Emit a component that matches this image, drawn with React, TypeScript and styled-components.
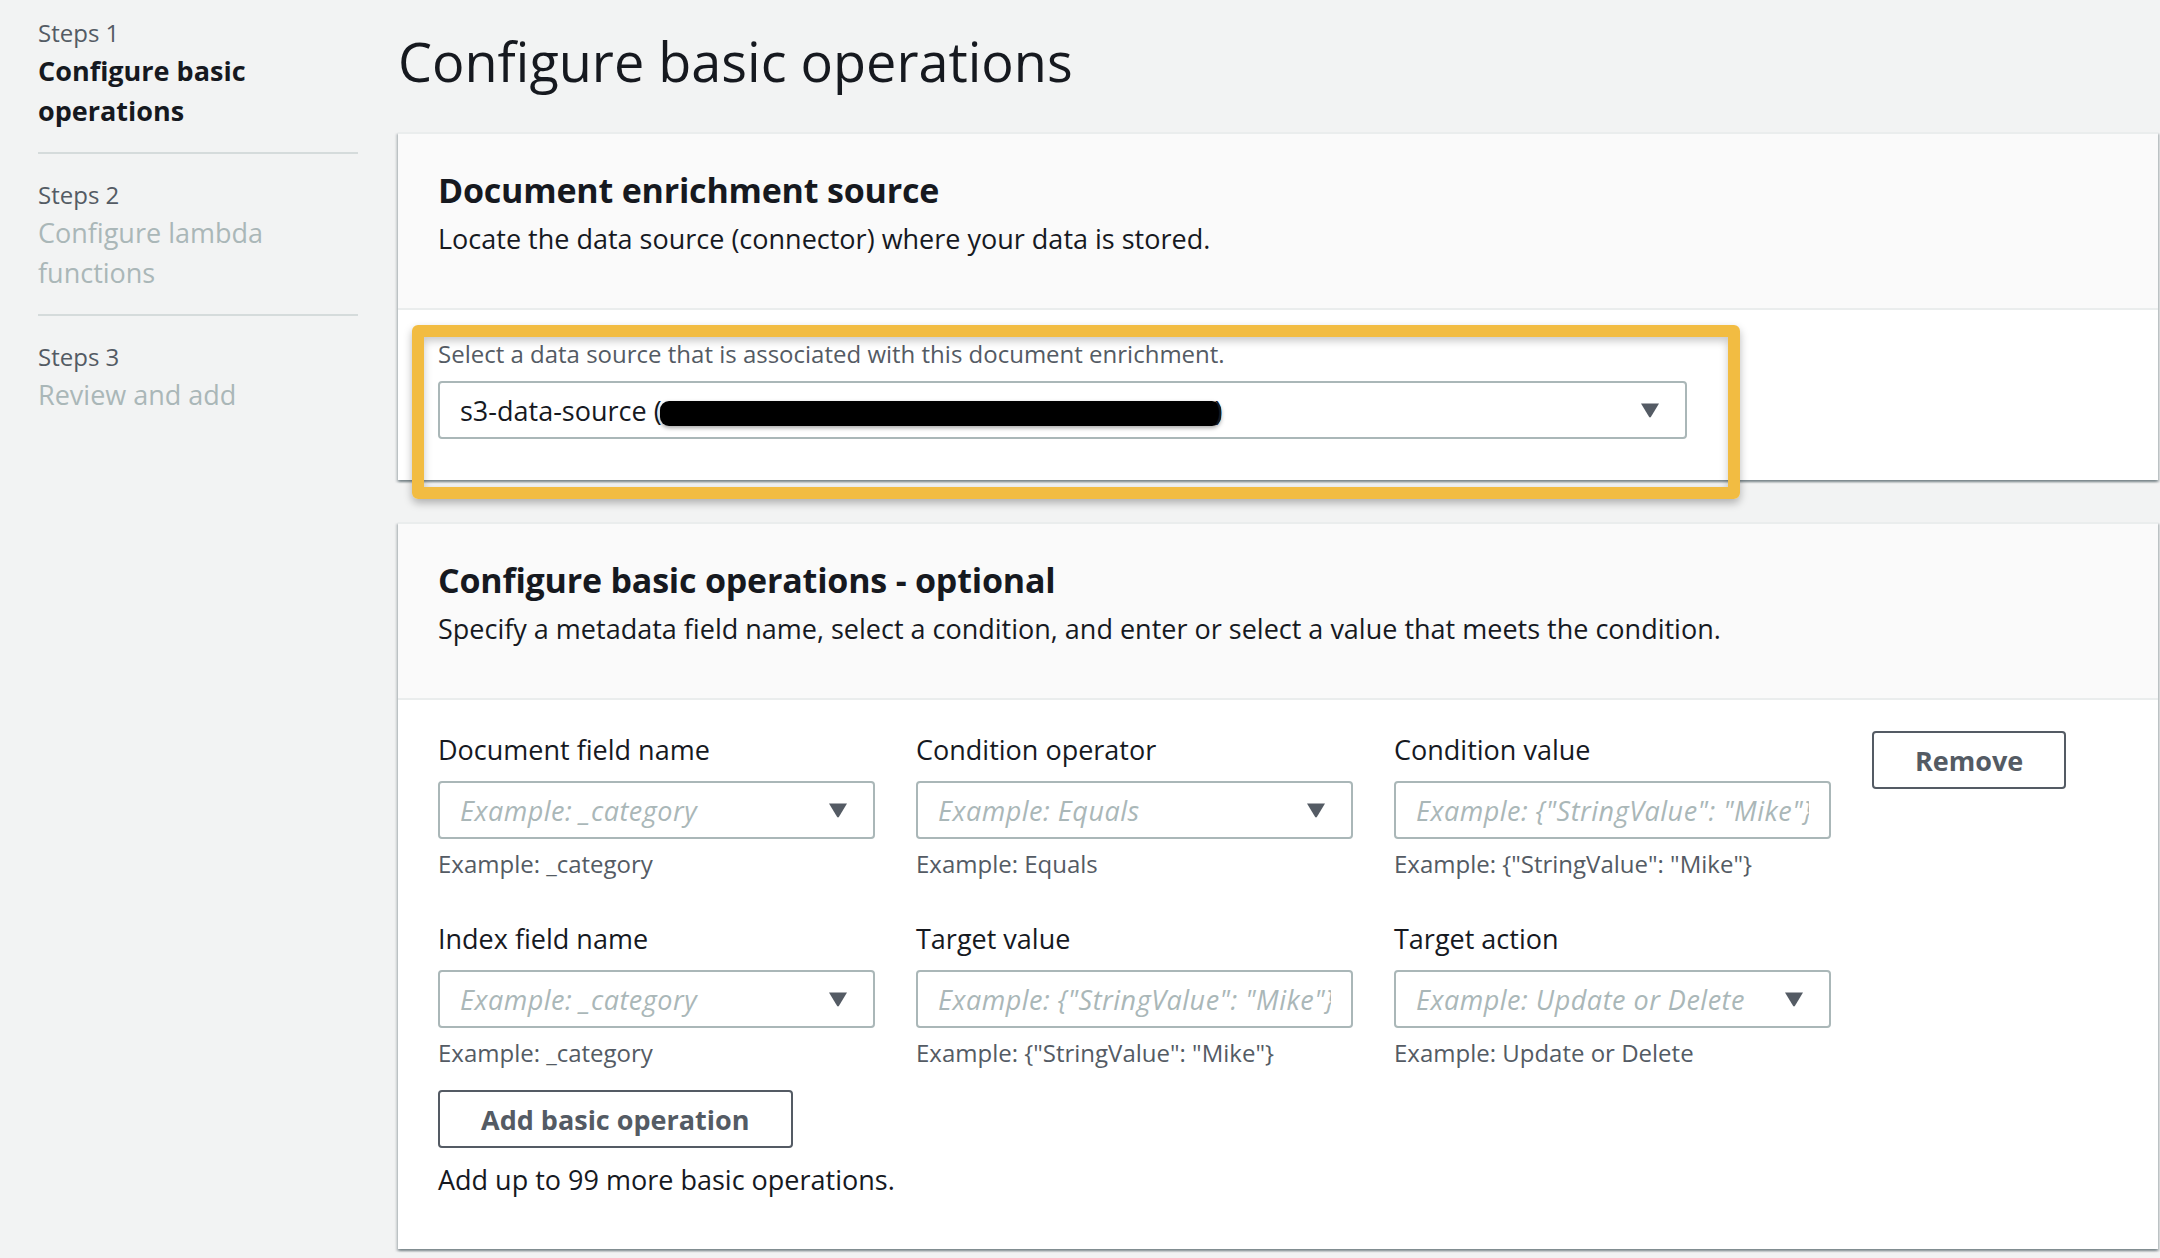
import React from 'react';
import styled, { createGlobalStyle } from 'styled-components';

const GlobalStyle = createGlobalStyle`
  html, body {
    margin: 0;
    padding: 0;
    background: #f2f3f3;
  }
  body {
    font-family: "Open Sans", "Noto Sans", Arial, sans-serif;
    color: #16191f;
  }
  * {
    box-sizing: border-box;
  }
`;

type FieldDef = {
    label: string;
    placeholder: string;
    helper: string;
    kind: 'select' | 'input';
};

const rows: FieldDef[][] = [
    [
        { label: 'Document field name', placeholder: 'Example: _category', helper: 'Example: _category', kind: 'select' },
        { label: 'Condition operator', placeholder: 'Example: Equals', helper: 'Example: Equals', kind: 'select' },
        { label: 'Condition value', placeholder: 'Example: {"StringValue": "Mike"}', helper: 'Example: {"StringValue": "Mike"}', kind: 'input' },
    ],
    [
        { label: 'Index field name', placeholder: 'Example: _category', helper: 'Example: _category', kind: 'select' },
        { label: 'Target value', placeholder: 'Example: {"StringValue": "Mike"}', helper: 'Example: {"StringValue": "Mike"}', kind: 'input' },
        { label: 'Target action', placeholder: 'Example: Update or Delete', helper: 'Example: Update or Delete', kind: 'select' },
    ],
];

const steps = [
    { label: 'Steps 1', title: 'Configure basic operations', active: true },
    { label: 'Steps 2', title: 'Configure lambda functions', active: false },
    { label: 'Steps 3', title: 'Review and add', active: false },
];

const Caret = () => (
    <svg width="20" height="16" viewBox="0 0 20 16">
        <path d="M1 1.5h18l-8 13.2a1.2 1.2 0 0 1-2 0z" fill="#545b64" />
    </svg>
);

const Field = ({ field }: { field: FieldDef }) => (
    <FieldBox>
        <FieldLabel>{field.label}</FieldLabel>
        {field.kind === 'select' ? (
            <SelectBox>
                <Placeholder>{field.placeholder}</Placeholder>
                <Caret />
            </SelectBox>
        ) : (
            <TextInput type="text" placeholder={field.placeholder} />
        )}
        <Helper>{field.helper}</Helper>
    </FieldBox>
);

const App = () => {
    return (
        <Page>
            <GlobalStyle />
            <Sidebar>
                {steps.map((s, i) => (
                    <Step key={s.label} $first={i === 0} $last={i === steps.length - 1}>
                        <StepLabel>{s.label}</StepLabel>
                        <StepTitle $active={s.active}>{s.title}</StepTitle>
                    </Step>
                ))}
            </Sidebar>
            <Main>
                <PageTitle>Configure basic operations</PageTitle>

                <Card>
                    <CardHeader>
                        <CardTitle>Document enrichment source</CardTitle>
                        <CardDesc>Locate the data source (connector) where your data is stored.</CardDesc>
                    </CardHeader>
                    <SourceBody>
                        <SourceField>
                            <SourceHint>Select a data source that is associated with this document enrichment.</SourceHint>
                            <SelectBox>
                                <SelectValue>
                                    s3-data-source (<Redacted />)
                                </SelectValue>
                                <Caret />
                            </SelectBox>
                            <Highlight />
                        </SourceField>
                    </SourceBody>
                </Card>

                <Card>
                    <CardHeader>
                        <CardTitle>Configure basic operations - optional</CardTitle>
                        <CardDesc>
                            Specify a metadata field name, select a condition, and enter or select a value that meets the condition.
                        </CardDesc>
                    </CardHeader>
                    <OpsBody>
                        <OpsGrid>
                            {rows[0].map(f => <Field key={f.label} field={f} />)}
                            <Button $top>Remove</Button>
                            {rows[1].map(f => <Field key={f.label} field={f} />)}
                        </OpsGrid>
                        <Button>Add basic operation</Button>
                        <OpsNote>Add up to 99 more basic operations.</OpsNote>
                    </OpsBody>
                </Card>
            </Main>
        </Page>
    );
};

const Page = styled.div`
  display: flex;
  min-height: 1258px;
`;

const Sidebar = styled.nav`
  width: 320px;
  margin-left: 38px;
  flex-shrink: 0;
`;

const Step = styled.div<{ $first?: boolean; $last?: boolean }>`
  padding: ${p => (p.$first ? '17px' : '25px')} 0 21px;
  border-bottom: ${p => (p.$last ? 'none' : '2px solid #d5dbdb')};
`;

const StepLabel = styled.div`
  font-size: 24px;
  line-height: 32px;
  color: #545b64;
`;

const StepTitle = styled.div<{ $active?: boolean }>`
  margin-top: 2px;
  font-size: 27px;
  line-height: 40px;
  font-weight: ${p => (p.$active ? 700 : 400)};
  color: ${p => (p.$active ? '#16191f' : '#aab7b8')};
`;

const Main = styled.main`
  flex: 1;
  margin-left: 40px;
  padding-right: 2px;
`;

const PageTitle = styled.h1`
  margin: 25px 0 35px;
  font-size: 54px;
  line-height: 72px;
  font-weight: 400;
  color: #16191f;
`;

const Card = styled.section`
  background: #fff;
  border-top: 2px solid #eaeded;
  box-shadow: 0 2px 2px rgba(0, 28, 36, 0.3), 2px 2px 2px rgba(0, 28, 36, 0.15),
    -2px 2px 2px rgba(0, 28, 36, 0.15);
  & + & {
    margin-top: 42px;
  }
`;

const CardHeader = styled.div`
  background: #fafafa;
  border-bottom: 2px solid #eaeded;
  padding: 34px 40px 47px;
`;

const CardTitle = styled.h2`
  margin: 0;
  font-size: 34px;
  line-height: 44px;
  font-weight: 700;
  letter-spacing: -0.2px;
`;

const CardDesc = styled.p`
  margin: 5px 0 0;
  font-size: 27px;
  line-height: 44px;
`;

const SourceBody = styled.div`
  padding: 28px 40px 41px;
`;

const SourceField = styled.div`
  position: relative;
  width: 1249px;
`;

const SourceHint = styled.div`
  font-size: 24px;
  line-height: 32px;
  color: #545b64;
  margin-bottom: 11px;
`;

const SelectBox = styled.div`
  display: flex;
  align-items: center;
  justify-content: space-between;
  height: 58px;
  padding: 0 25px 0 20px;
  border: 2px solid #aab7b8;
  border-radius: 4px;
  background: #fff;
  svg {
    flex-shrink: 0;
  }
`;

const SelectValue = styled.span`
  font-size: 27px;
  color: #16191f;
  white-space: nowrap;
`;

const Redacted = styled.span`
  display: inline-block;
  width: 561px;
  height: 25px;
  margin: 0 -6px 0 -2px;
  vertical-align: -5px;
  background: #000;
  border-radius: 9px;
  box-shadow: 0 2px 4px rgba(0, 0, 0, 0.35);
`;

const Highlight = styled.div`
  position: absolute;
  top: -13px;
  left: -26px;
  right: -53px;
  bottom: -60px;
  border: 12px solid #f2bc42;
  border-radius: 6px;
  box-shadow: 0 4px 9px rgba(0, 0, 0, 0.28), inset 0 4px 9px rgba(0, 0, 0, 0.22);
  pointer-events: none;
`;

const OpsBody = styled.div`
  padding: 28px 40px 47px;
`;

const OpsGrid = styled.div`
  display: grid;
  grid-template-columns: 437px 437px 437px auto;
  column-gap: 41px;
  row-gap: 37px;
  align-items: start;
`;

const FieldBox = styled.div`
  display: flex;
  flex-direction: column;
`;

const FieldLabel = styled.label`
  font-size: 27px;
  line-height: 44px;
  color: #16191f;
  margin-bottom: 9px;
`;

const Placeholder = styled.span`
  font-size: 27px;
  font-style: italic;
  letter-spacing: 0.5px;
  color: #aab7b8;
  white-space: nowrap;
`;

const TextInput = styled.input`
  height: 58px;
  width: 100%;
  padding: 0 20px;
  border: 2px solid #aab7b8;
  border-radius: 4px;
  font-family: inherit;
  font-size: 27px;
  color: #16191f;
  outline: none;
  &::placeholder {
    font-style: italic;
    letter-spacing: 0.5px;
    color: #aab7b8;
  }
`;

const Helper = styled.div`
  margin-top: 9px;
  font-size: 24px;
  line-height: 32px;
  color: #545b64;
`;

const Button = styled.button<{ $top?: boolean }>`
  display: block;
  height: 58px;
  margin-top: ${p => (p.$top ? '3px' : '21px')};
  padding: 0 41px;
  justify-self: start;
  background: #fff;
  border: 2px solid #545b64;
  border-radius: 4px;
  font-family: inherit;
  font-size: 27px;
  font-weight: 700;
  color: #545b64;
`;

const OpsNote = styled.p`
  margin: 10px 0 0;
  font-size: 27px;
  line-height: 44px;
`;

export default App;
